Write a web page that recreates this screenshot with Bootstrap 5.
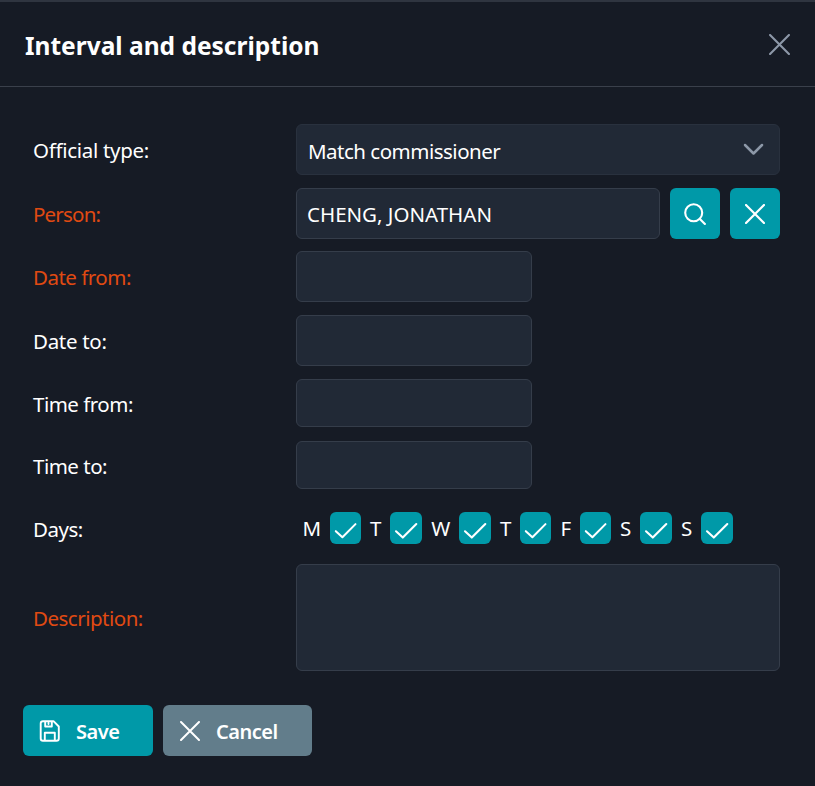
<!DOCTYPE html>
<html lang="en">
<head>
<meta charset="utf-8">
<meta name="viewport" content="width=device-width, initial-scale=1">
<title>Interval and description</title>
<link href="https://cdn.jsdelivr.net/npm/bootstrap@5.3.0/dist/css/bootstrap.min.css" rel="stylesheet">
<style>
  body { background: #161b25; color: #fff; font-family: "Noto Sans", "Open Sans", sans-serif; font-size: 20.5px; line-height: 28px; letter-spacing: -.5px; height: 786px; overflow: hidden; }
  svg { display: block; fill: none; stroke: currentColor; stroke-linecap: round; stroke-linejoin: round; }
  .dialog-head { height: 87px; border-top: 2px solid #2f3540; border-bottom: 1px solid #3a404b; padding: 0 25px 0 25px; }
  .dialog-title { font-size: 24.5px; font-weight: 700; line-height: 32px; letter-spacing: 0; padding-top: 4px; }
  .close-btn { color: #8d98a8; line-height: 0; padding-top: 1px; }
  .dialog-form { padding: 37px 35px 0 33px; }
  .field-row { display: flex; align-items: center; margin-bottom: 13px; }
  .row-person { margin-bottom: 12px; }
  .row-time-from { margin-bottom: 14px; }
  .row-time-to { margin-bottom: 23px; }
  .row-days { height: 32px; margin-bottom: 20px; }
  .field-label { width: 263px; flex: none; padding-top: 1px; }
  .label-wide { letter-spacing: -.3px; }
  .label-tight { letter-spacing: -.8px; }
  .required { color: #e04a12; }
  .field, .field:focus { background: #212936; border: 1px solid #353d4a; border-radius: 6px; color: #fff; height: 51px; padding: 1px 11px 0 10px; font-size: inherit; letter-spacing: 0; box-shadow: none; }
  .field-short, .field-short:focus { width: 236px; }
  .field-time, .field-time:focus { height: 48px; }
  .memo, .memo:focus { height: 107px; resize: none; }
  .picker { border-color: #29313e; padding: 3px 15px 0 11px; letter-spacing: -.5px; }
  .picker svg { color: #8d98a8; margin-top: -3px; }
  .person-group { gap: 10px; }
  .square-btn { width: 50px; height: 51px; flex: none; }
  .action { background: #0099a8; color: #fff; border: 0; border-radius: 6px; }
  .action-muted { background: #627d8b; }
  .action:hover { color: #fff; background: #00aab9; }
  .days { display: grid; grid-template-columns: 34px 31px 29px 32px 37px 32px 29px 31px 29px 31px 29px 32px 29px 32px; text-align: center; align-items: center; }
  .days span:first-child { padding-right: 3px; }
  .days i { display: block; height: 32px; border-radius: 6px; background: #0099a8; }
  .days i svg { width: 100%; height: 32px; stroke-width: 2.1; }
  .actions { padding: 34px 0 0 23px; gap: 10px; }
  .big-btn { height: 51px; font-size: 20px; font-weight: 600; letter-spacing: -.5px; }
  .big-btn span { padding-top: 2px; }
  .save-btn { width: 130px; padding: 0 0 0 16px; gap: 15px; }
  .cancel-btn { width: 149px; padding: 0 0 0 17px; gap: 16px; }
</style>
</head>
<body>
<svg width="0" height="0" class="d-none">
  <symbol id="cross" viewBox="0 0 20 20"><path d="M1 1 19 19M19 1 1 19"/></symbol>
  <symbol id="tick" viewBox="0 0 32 32"><path d="m6 19.300 6.800 6.300L26.300 12"/></symbol>
</svg>
<header class="dialog-head d-flex align-items-center justify-content-between">
  <h1 class="dialog-title m-0">Interval and description</h1>
  <button class="close-btn btn px-0 pb-0 border-0" aria-label="Close"><svg width="21" height="21" stroke-width="2"><use href="#cross"/></svg></button>
</header>
<form class="dialog-form">
  <div class="field-row"><label class="field-label label-wide">Official type:</label>
    <div class="field picker d-flex align-items-center justify-content-between flex-grow-1" role="combobox"><span>Match commissioner</span>
      <svg width="21" height="13" viewBox="0 0 21 13" stroke-width="2.500"><path d="m2 2 8.500 8.500L19 2"/></svg></div></div>
  <div class="field-row row-person"><label class="field-label required label-tight">Person:</label>
    <div class="person-group d-flex flex-grow-1">
      <input class="field form-control" value="CHENG, JONATHAN" aria-label="Person">
      <button type="button" class="square-btn action btn p-0 d-flex align-items-center justify-content-center" aria-label="Search"><svg width="22" height="22" viewBox="0 0 22 22" stroke-width="2.100"><circle cx="9.700" cy="9.700" r="8.500"/><path d="m15.900 15.900 5 5"/></svg></button>
      <button type="button" class="square-btn action btn p-0 d-flex align-items-center justify-content-center" aria-label="Clear"><svg width="20" height="20" stroke-width="2.200"><use href="#cross"/></svg></button>
    </div></div>
  <div class="field-row"><label class="field-label required">Date from:</label><input class="field field-short form-control" aria-label="Date from"></div>
  <div class="field-row"><label class="field-label label-wide">Date to:</label><input class="field field-short form-control" aria-label="Date to"></div>
  <div class="field-row row-time-from"><label class="field-label">Time from:</label><input class="field field-short field-time form-control" aria-label="Time from"></div>
  <div class="field-row row-time-to"><label class="field-label">Time to:</label><input class="field field-short field-time form-control" aria-label="Time to"></div>
  <div class="field-row row-days"><label class="field-label">Days:</label>
    <div class="days">
      <span>M</span><i><svg><use href="#tick"/></svg></i>
      <span>T</span><i><svg><use href="#tick"/></svg></i>
      <span>W</span><i><svg><use href="#tick"/></svg></i>
      <span>T</span><i><svg><use href="#tick"/></svg></i>
      <span>F</span><i><svg><use href="#tick"/></svg></i>
      <span>S</span><i><svg><use href="#tick"/></svg></i>
      <span>S</span><i><svg><use href="#tick"/></svg></i>
    </div></div>
  <div class="field-row mb-0"><label class="field-label required">Description:</label><textarea class="field memo form-control" aria-label="Description"></textarea></div>
</form>
<footer class="actions d-flex">
  <button class="action big-btn save-btn btn d-flex align-items-center">
    <svg width="22" height="22" viewBox="0 0 22 22" stroke-width="1.900"><path d="M4 1.200h10.500l5.300 5.300v12a2.300 2.300 0 0 1-2.300 2.300H4a2.300 2.300 0 0 1-2.300-2.300v-15A2.300 2.300 0 0 1 4 1.200ZM6.200 1.500v5h6.600v-5M9.500 3v1M5.800 20.500v-7.800h10v7.800"/></svg>
    <span>Save</span></button>
  <button class="action action-muted big-btn cancel-btn btn d-flex align-items-center">
    <svg width="20" height="20" stroke-width="2"><use href="#cross"/></svg>
    <span>Cancel</span></button>
</footer>
<script src="https://cdn.jsdelivr.net/npm/bootstrap@5.3.0/dist/js/bootstrap.bundle.min.js"></script>
</body>
</html>
